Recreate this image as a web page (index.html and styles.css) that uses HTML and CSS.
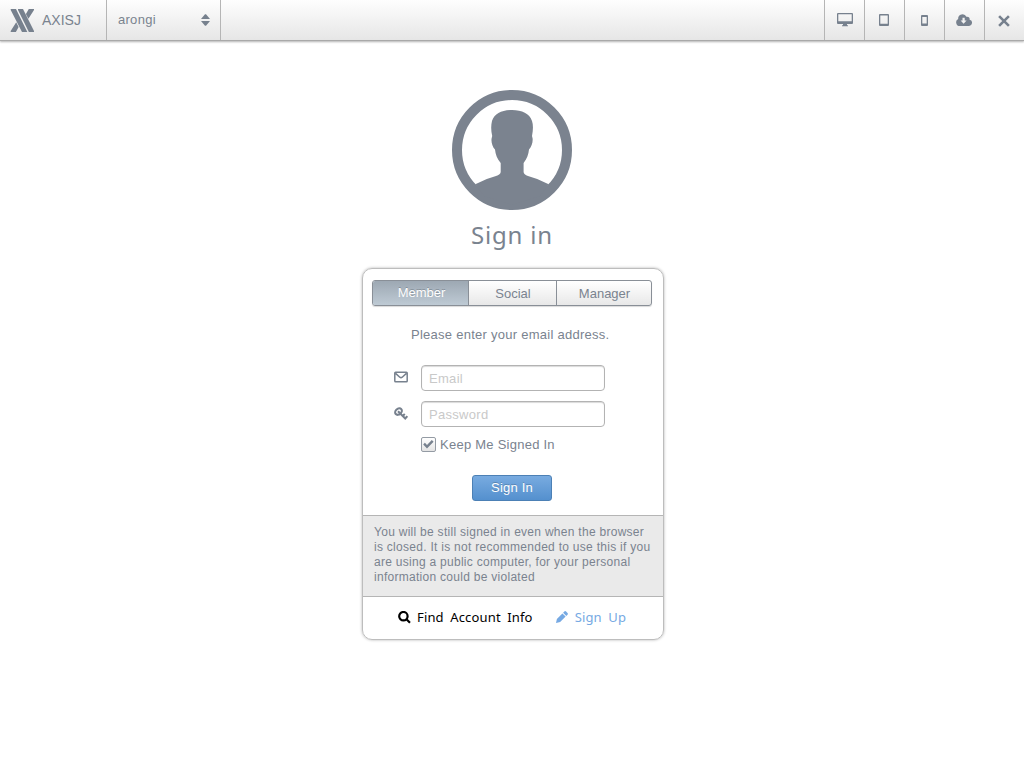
FILE: index.html
```html
<!DOCTYPE html>
<html lang="en">
<head>
<meta charset="utf-8">
<title>AXISJ</title>
<link rel="stylesheet" href="styles.css">
</head>
<body>
<header class="bar">
  <div class="brand">
    <svg class="logo" width="24" height="24" viewBox="0 0 24 24"><path d="M0.7 0H6L17.3 23H12L0.7 1ZM8 0H13L24 22V23H18.9L8 1ZM18.8 0H24V1L18.4 9.8L15.9 5ZM6.2 13.2L8.6 18L5.9 23H0.7V22Z"/></svg>
    <span class="brand-name">AXISJ</span>
  </div>
  <div class="picker"><span>arongi</span>
    <svg width="9" height="12" viewBox="0 0 9 12"><path d="M0 5L4 .2H5L9 5ZM0 7H9L5 11.8H4Z"/></svg>
  </div>
  <nav class="tools">
    <span class="tool"><svg width="16" height="14" viewBox="0 0 16 14"><path fill-rule="evenodd" d="M1 0H15Q16 0 16 1V10Q16 11 15 11H10V12L11 12.4V13.2H5V12.4L6 12V11H1Q0 11 0 10V1Q0 0 1 0ZM1.3 1.3V8.2H14.7V1.3Z"/></svg></span>
    <span class="tool tool-l"><svg width="10" height="12" viewBox="0 0 10 12"><path fill-rule="evenodd" d="M1 0H9Q10 0 10 1V11Q10 12 9 12H1Q0 12 0 11V1Q0 0 1 0ZM1.3 1.4V9.7H8.7V1.4Z"/></svg></span>
    <span class="tool tool-s"><svg width="7" height="11" viewBox="0 0 7 11"><path fill-rule="evenodd" d="M1 0H6Q7 0 7 1V10Q7 11 6 11H1Q0 11 0 10V1Q0 0 1 0ZM1.3 2V8.4H5.7V2Z"/></svg></span>
    <span class="tool tool-l"><svg width="16" height="12" viewBox="0 0 16 12"><path fill-rule="evenodd" d="M3.8 12A3.7 3.7 0 0 1 2.2 5A4.3 4.3 0 0 1 10.4 2.8A2.5 2.5 0 0 1 13.6 5.7A3.2 3.2 0 0 1 12.7 12ZM6.5 3.7V6.5H4.6L7.6 9.8L10.6 6.5H8.7V3.7Z"/></svg></span>
    <span class="tool tool-x"><svg width="12" height="12" viewBox="0 0 12 12"><path class="cross" d="M1.1 1.1L10.9 10.9M10.9 1.1L1.1 10.9"/></svg></span>
  </nav>
</header>
<main class="page">
  <svg class="avatar" width="120" height="120" viewBox="0 0 120 120">
    <circle class="ring" cx="60" cy="60" r="55"/>
    <path d="M23.3 94.3Q34 88.5 44 86Q48.5 84.5 48.7 82V73C45 68.5 43.5 64.5 43 59.5C40.5 57 39 52 39.6 48.5L40.2 46C38.8 40 39 35 40 31C42.5 23.5 50 20 60 20S77.5 23.5 80 31C81.3 35 81.2 40 80 46L80.6 48.5C81 52 79.5 57 77 59.5C76.5 64.5 75 68.5 71.6 73V82Q71.8 84.5 76 86Q86 88.5 96.7 94.3L88 106L60 115L32 106Z"/>
  </svg>
  <h1 class="title">Sign in</h1>
  <section class="card">
    <div class="tabs">
      <span class="tab tab-on">Member</span><span class="tab tab-mid">Social</span><span class="tab tab-end">Manager</span>
    </div>
    <p class="lead">Please enter your email address.</p>
    <form class="form">
      <div class="field">
        <svg width="14" height="12" viewBox="0 0 14 12"><path class="line" d="M.8 2Q.8 1.2 1.6 1.2H12.4Q13.2 1.2 13.2 2V10Q13.2 10.8 12.4 10.8H1.6Q.8 10.8 .8 10ZM1.6 2.4L5.8 6.2Q7 7.2 8.2 6.2L12.4 2.4"/></svg>
        <input class="input" type="text" placeholder="Email">
      </div>
      <div class="field">
        <svg width="14" height="14" viewBox="0 0 14 14"><ellipse class="key" cx="4.5" cy="4.6" rx="3.7" ry="2.8" transform="rotate(-42 4.5 4.6)"/><path class="key" d="M4 4.2L12 12.2M11 11.4L13.4 9.2M8.6 9L10.8 7"/></svg>
        <input class="input" type="password" placeholder="Password">
      </div>
      <div class="keep"><span class="box"><svg width="11" height="9" viewBox="0 0 11 9"><path d="M.2 4.5L1.9 2.8L4 4.9L8.8 .1L10.6 1.8L4 8.4Z"/></svg></span><span>Keep Me Signed In</span></div>
      <button class="submit" type="button">Sign In</button>
    </form>
    <p class="note"><span>You will be still signed in even when the browser</span><span>is closed. It is not recommended to use this if you</span><span>are using a public computer, for your personal</span><span>information could be violated</span></p>
    <footer class="links">
      <a class="find"><svg width="13" height="13" viewBox="0 0 13 13"><circle cx="5.4" cy="5.2" r="4.2"/><path d="M8.5 8.3L12 11.8"/></svg><span>Find Account Info</span></a>
      <a class="join"><svg width="12" height="12" viewBox="0 0 12 12"><path d="M0 12L.9 7.9L6.4 2.4L9.6 5.6L4.1 11.1ZM7.1 1.7L8.3 .5Q9.2 -.4 10.1 .5L11.5 1.9Q12.4 2.8 11.5 3.7L10.3 4.9Z"/></svg><span>Sign Up</span></a>
    </footer>
  </section>
</main>
</body>
</html>
```
FILE: styles.css
```css
* { box-sizing: border-box; }
body { margin: 0; height: 768px; overflow: hidden; background: #fff; color: #7a838f; font: 13px/15px "Liberation Sans", Arial, sans-serif; }
svg { display: block; flex: none; fill: #77818e; }
.bar { display: flex; height: 41px; background: linear-gradient(#fefefe, #e6e6e6); border-bottom: 1px solid #a9a9a9; box-shadow: 0 1px 2px rgba(0,0,0,.3); }
.brand { display: flex; width: 107px; padding: 9px 0 0 10px; border-right: 1px solid #b5b5b5; }
.brand-name { margin: 4px 0 0 8px; font-size: 14px; letter-spacing: 0; }
.picker { display: flex; justify-content: space-between; width: 114px; padding: 12px 10px 0 11px; border-right: 1px solid #b5b5b5; letter-spacing: .28px; }
.picker svg { margin-top: 2px; }
.tools { display: flex; margin-left: auto; }
.tool { display: flex; align-items: center; justify-content: center; width: 40px; border-left: 1px solid #b5b5b5; }
.tool-l { padding-right: 2px; }
.tool-s { padding-right: 1px; }
.tool-x { padding: 2px 2px 0 0; }
.cross { fill: none; stroke: #77818e; stroke-width: 2.6; }
.page { display: flex; flex-direction: column; align-items: center; padding-top: 49px; }
.ring { fill: none; stroke: #7b838f; stroke-width: 10; }
.avatar { fill: #7b838f; }
.title { margin: 9px 0 0; font: 400 24px/32px "Noto Sans", sans-serif; letter-spacing: .8px; }
.card { width: 302px; height: 372px; margin: 17px 0 0 2px; border: 1px solid #bdbdbd; border-radius: 10px; box-shadow: 0 0 3px rgba(0,0,0,.3); overflow: hidden; }
.tabs { display: flex; width: 280px; height: 26px; margin: 11px 0 0 9px; border: 1px solid #898f97; border-radius: 3px; background: linear-gradient(#fff, #e8e8e8); box-shadow: 0 1px 1px rgba(0,0,0,.15); text-align: center; line-height: 25px; overflow: hidden; }
.tab { padding-left: 1px; letter-spacing: 0; }
.tab-on { width: 95px; padding-left: 2px; background: linear-gradient(#9da8b3, #becad4); color: #fff; line-height: 23px; text-shadow: 0 -1px 0 rgba(80,90,100,.4); }
.tab-mid { width: 88px; border-left: 1px solid #898f97; }
.tab-end { flex: 1; border-left: 1px solid #898f97; }
.lead { margin: 21px 0 0 48px; letter-spacing: .26px; white-space: nowrap; }
.form { display: flex; flex-direction: column; padding: 23px 0 0 31px; }
.field { display: flex; gap: 13px; height: 26px; margin-bottom: 10px; }
.field svg { margin-top: 6px; }
.line { fill: none; stroke: #77818e; stroke-width: 1.5; }
.key { fill: none; stroke: #77818e; stroke-width: 2.1; }
.input { width: 184px; height: 26px; padding: 0 7px; border: 1px solid #b3b3b3; border-radius: 4px; box-shadow: inset 0 1px 1px rgba(0,0,0,.15); background: #fff; font: 13px "Liberation Sans", Arial, sans-serif; letter-spacing: .3px; }
.input::placeholder { color: #c9c9c9; }
.keep { display: flex; align-items: center; gap: 4px; height: 15px; margin-left: 27px; letter-spacing: .25px; }
.box { display: flex; align-items: center; justify-content: center; width: 15px; height: 15px; border: 1px solid #949ba4; border-radius: 2px; background: linear-gradient(#fff, #e4e4e4); }
.submit { width: 80px; height: 26px; margin: 23px 0 0 78px; padding: 0 0 1px; border: 1px solid #4c80b5; border-radius: 3px; background: linear-gradient(#78abe0, #5490ce); color: #fff; font: 13px "Liberation Sans", Arial, sans-serif; letter-spacing: .2px; text-shadow: 0 -1px 0 rgba(0,0,0,.2); }
.note { height: 82px; margin: 14px 0 0; padding: 9px 0 0 11px; border: solid #b5b5b5; border-width: 1px 0; background: #eaeaea; font-size: 12px; line-height: 15px; white-space: nowrap; }
.note span { display: block; letter-spacing: .28px; }
.links { display: flex; gap: 23px; padding: 11px 0 0 35px; font: 13px/18px "Noto Sans", sans-serif; white-space: nowrap; }
.find, .join { display: flex; align-items: flex-start; gap: 6px; word-spacing: 3px; letter-spacing: .15px; }
.find { color: #000; }
.find svg { margin-top: 3px; fill: none; stroke: #000; stroke-width: 2.2; }
.join { color: #76a9e3; gap: 7px; }
.join svg { margin-top: 3px; fill: #76a9e3; }
```
